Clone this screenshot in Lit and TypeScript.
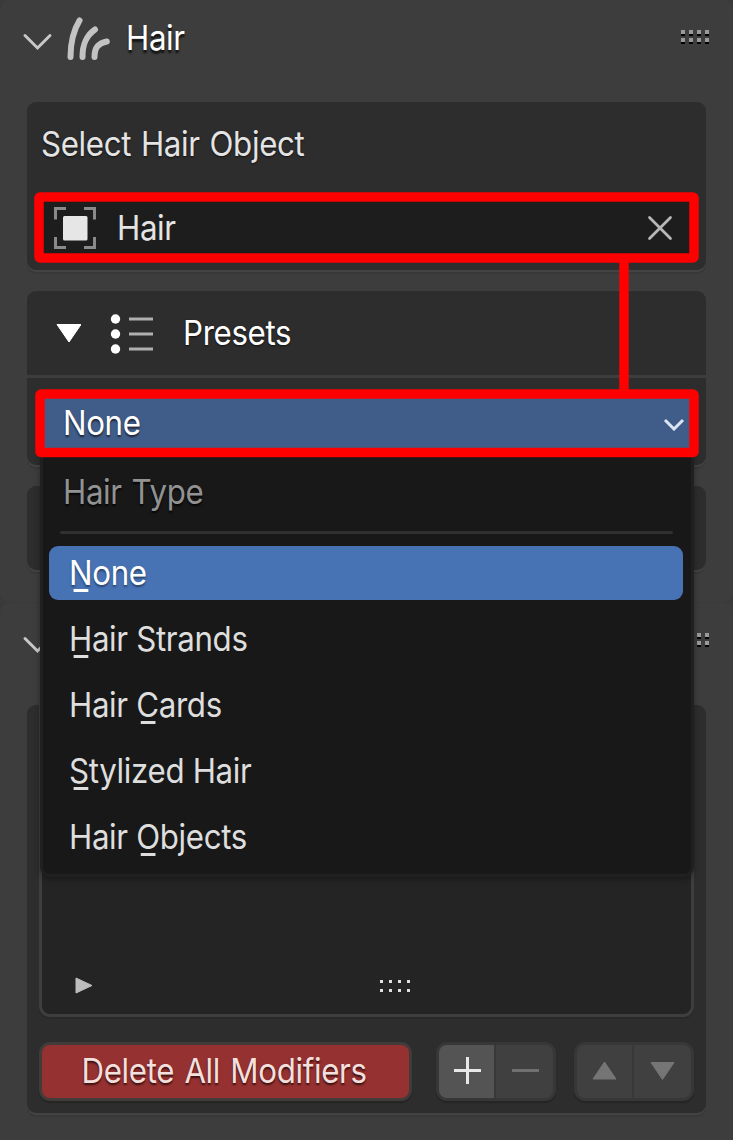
import { LitElement, html, css, svg } from "lit";
import { customElement, property } from "lit/decorators.js";

@customElement("panel-header")
class PanelHeader extends LitElement {
  @property() label = "";

  static styles = css`
    :host { display: flex; height: 102px; box-sizing: border-box; padding: 0 22px 0 22px; justify-content: space-between; }
    .left { display: flex; }
    .icon { display: block; flex: none; }
    .title { margin: 18px 0 0 13.500px; height: 40px; line-height: 40px; color: #fff; text-shadow: 0 3px 2px #111; white-space: nowrap; transform: scaleX(0.92); transform-origin: left; }
    .grip { display: grid; grid-template-columns: repeat(4, 4px); column-gap: 4px; row-gap: 2px; margin: 30px 2px 0 0; height: 14px; }
    .dot { width: 4px; height: 4px; background: #999; border-bottom: 2px solid #000; }
  `;

  render() {
    return html`
      <div class="left">
        <svg class="icon" width="90" height="70" viewBox="22 0 90 70" fill="none">
          <path d="M25 35.5 37.5 48 50 35.5" stroke="#c8c8c8" stroke-width="3" stroke-linecap="round" />
          <g stroke="#c3c3c3" stroke-width="6" stroke-linecap="round">
            <path d="M70.500 57C70.500 43 72.500 32 79.500 20.500" />
            <path d="M82.500 57C82.500 44 86 36 95 29.500" />
            <path d="M94.500 57C94.500 47 98.500 43.500 106.800 41.500" />
          </g>
        </svg>
        <div class="title">${this.label}</div>
      </div>
      <div class="grip">${Array.from({ length: 8 }, () => html`<i class="dot"></i>`)}</div>
    `;
  }
}

type Item = { before: string; key: string; after: string; active?: boolean };

const ITEMS: Item[] = [
  { before: "", key: "N", after: "one", active: true },
  { before: "", key: "H", after: "air Strands" },
  { before: "Hair ", key: "C", after: "ards" },
  { before: "", key: "S", after: "tylized Hair" },
  { before: "Hair ", key: "O", after: "bjects" },
];

@customElement("app-root")
class AppRoot extends LitElement {
  static styles = css`
    :host {
      display: block; position: relative; width: 733px; height: 1140px; overflow: hidden;
      background: #3a3a3a; color: #e4e4e4;
      font: 400 34px/40px Inter, "Liberation Sans", sans-serif;
      letter-spacing: -0.38px;
    }
    .t { display: inline-block; transform: scaleX(0.92); transform-origin: left; white-space: nowrap; }
    .panel { background: #3d3d3d; border-radius: 10px; box-sizing: border-box; }
    .first { height: 602px; }
    .second { height: 545px; margin-top: 1px; }
    .boxes { display: flex; flex-direction: column; gap: 21px; padding: 0 27px; }
    .box { background: #2d2d2d; border-radius: 9px; box-sizing: border-box; box-shadow: 0 2px 0 #434343, 0 4px 0 #383838; }
    .select { height: 168px; display: flex; flex-direction: column; padding: 22px 10px 0 14px; }
    .label { height: 40px; text-shadow: 0 1px 2px #111; word-spacing: 1.5px; }
    .field { margin: 35px 0 0 -5.500px; height: 58px; background: #1d1d1d; border-radius: 6px; display: flex; align-items: center; }
    .object { margin-left: 18px; }
    .value { flex: 1; margin-left: 20px; }
    .clear { margin-right: 23px; }
    .presets { height: 174px; }
    .head { height: 84px; display: flex; align-items: center; border-bottom: 3px solid #3d3d3d; padding-left: 28px; color: #fff; text-shadow: 0 1px 2px #111; }
    .head .bullets { margin: 0 28.500px 0 27px; }
    .combo { margin: 18px 14px 0 14px; height: 56px; background: #405d8a; color: #fff; display: flex; align-items: center; justify-content: space-between; padding: 0 7px 2px 22px; box-sizing: border-box; text-shadow: 0 2px 2px #223; }
    .blank { height: 84px; }
    .stack { height: 408px; display: flex; flex-direction: column; padding: 0 12px; }
    .list { height: 312px; flex: none; box-sizing: border-box; border: 3px solid #3e3e3e; border-top: 0; border-radius: 0 0 11px 11px; background: #242424; display: flex; align-items: flex-end; padding: 0 0 18px 31px; box-shadow: 0 2px 0 #292929; }
    .list .dots { margin: 0 0 -1px 286px; }
    .actions { display: flex; margin-top: 25px; height: 59px; }
    .btn { box-sizing: border-box; border: 3px solid #373737; border-radius: 11px; display: flex; background: #404040; overflow: hidden; box-shadow: 0 2px 1px #252525; }
    .delete { width: 373px; background: #963131; border-color: #413b3a; color: #f3dfdc; justify-content: center; align-items: center; padding: 0 2px 1px 0; text-shadow: 0 2px 2px #3a1010; word-spacing: 2px; }
    .delete .t { transform-origin: center; }
    .pair { width: 120px; }
    .gap-a { margin-left: 24px; }
    .gap-b { margin-left: 18px; }
    .half { flex: 1; display: flex; align-items: center; justify-content: center; padding-bottom: 1px; }
    .half:first-child { flex: 0 0 55px; }
    .half + .half { border-left: 2px solid #383838; }
    .lit { background: #545454; }
    .menu { position: absolute; left: 40px; top: 452px; width: 654px; height: 425px; box-sizing: border-box; background: #181818; border: 3px solid #202020; border-top: 0; border-radius: 0 0 10px 10px; padding: 20px 8px 0 6px; box-shadow: 0 2px 6px #0005; }
    .caption { padding-left: 13.500px; color: #929292; height: 40px; text-shadow: 0 2px 2px #050505; word-spacing: 1.500px; }
    .rule { height: 3px; margin: 19px 10px 12px 11px; background: #303030; border-radius: 2px; }
    .item { height: 54px; line-height: 54px; margin-bottom: 12px; border-radius: 9px; padding-left: 20px; color: #dedede; }
    .active { background: #4772b3; color: #fff; text-shadow: 0 2px 2px #2a436c; }
    .key { position: relative; }
    .key::after { content: ""; position: absolute; left: 5px; bottom: 1px; width: 16.300px; height: 3px; background: currentColor; }
    .marks { position: absolute; left: 0; top: 0; }
  `;

  render() {
    const dots = [0, 1, 2, 3].flatMap((c) => [0, 1].map((r) => svg`<rect x=${1 + c * 9} y=${1 + r * 9} width="3" height="3" fill="#e0e0e0" />`));
    return html`
      <section class="panel first">
        <panel-header label="Hair"></panel-header>
        <div class="boxes">
          <div class="box select">
            <div class="label"><span class="t">Select Hair Object</span></div>
            <div class="field">
              <svg class="object" width="43" height="43" fill="none">
                <path d="M1.500 12.500V1.500h10.500M30 1.500h10.500v11M40.500 30v10.500H30M12 40.500H1.500V30" stroke="#8a8a8a" stroke-width="3" />
                <rect x="9" y="9" width="24.500" height="24.500" rx="1.500" fill="#e6e6e6" />
              </svg>
              <span class="value"><span class="t">Hair</span></span>
              <svg class="clear" width="26" height="26"><path d="M2.500 2.500 23.500 23.500M23.500 2.500 2.500 23.500" stroke="#b8b8b8" stroke-width="2.800" stroke-linecap="round" /></svg>
            </div>
          </div>
          <div class="box presets">
            <div class="head">
              <svg width="26" height="20"><path d="M2 1.500H26L14 19Z" fill="#fff" stroke="#fff" stroke-linejoin="round" /></svg>
              <svg class="bullets" width="46" height="42" fill="none">
                <g fill="#fff"><circle cx="7.500" cy="7" r="4.700" /><circle cx="7.500" cy="22" r="4.700" /><circle cx="7.500" cy="37" r="4.700" /></g>
                <path d="M21 7h24M21 22h24M21 37h24" stroke="#b0b0b0" stroke-width="3" />
              </svg>
              <span class="t">Presets</span>
            </div>
            <div class="combo">
              <span class="t">None</span>
              <svg width="22" height="16" fill="none"><path d="M2 5 11 14 20 5" stroke="#dbe5f3" stroke-width="3" /></svg>
            </div>
          </div>
          <div class="box blank"></div>
        </div>
      </section>
      <section class="panel second">
        <panel-header></panel-header>
        <div class="boxes">
          <div class="box stack">
            <div class="list">
              <svg width="20" height="22"><path d="M3 4 19 11.500 3 19Z" fill="#bdbdbd" stroke="#bdbdbd" stroke-linejoin="round" /></svg>
              <svg class="dots" width="34" height="18">${dots}</svg>
            </div>
            <div class="actions">
              <div class="btn delete"><span class="t">Delete All Modifiers</span></div>
              <div class="btn pair gap-a">
                <div class="half lit"><svg width="28" height="30"><path d="M14.500 1v27M1 14.500h27" stroke="#e8e8e8" stroke-width="3" /></svg></div>
                <div class="half"><svg width="28" height="30"><path d="M1 14.500h27" stroke="#707070" stroke-width="3" /></svg></div>
              </div>
              <div class="btn pair gap-b">
                <div class="half"><svg width="26" height="20"><path d="M12.500 1 24 18H1Z" fill="#757575" stroke="#757575" stroke-linejoin="round" /></svg></div>
                <div class="half"><svg width="26" height="20"><path d="M12.500 18.500 24 1.500H1Z" fill="#757575" stroke="#757575" stroke-linejoin="round" /></svg></div>
              </div>
            </div>
          </div>
        </div>
      </section>
      <div class="menu">
        <div class="caption"><span class="t">Hair Type</span></div>
        <div class="rule"></div>
        ${ITEMS.map((i) => html`<div class="item ${i.active ? "active" : ""}"><span class="t">${i.before}<span class="key">${i.key}</span>${i.after}</span></div>`)}
      </div>
      <svg class="marks" width="733" height="480" fill="none" stroke="#f00" stroke-width="9.500">
        <rect x="39" y="197" width="655" height="61" rx="1" />
        <rect x="40" y="394" width="654" height="58.500" rx="1" />
        <path d="M624 260V392" />
      </svg>
    `;
  }
}
